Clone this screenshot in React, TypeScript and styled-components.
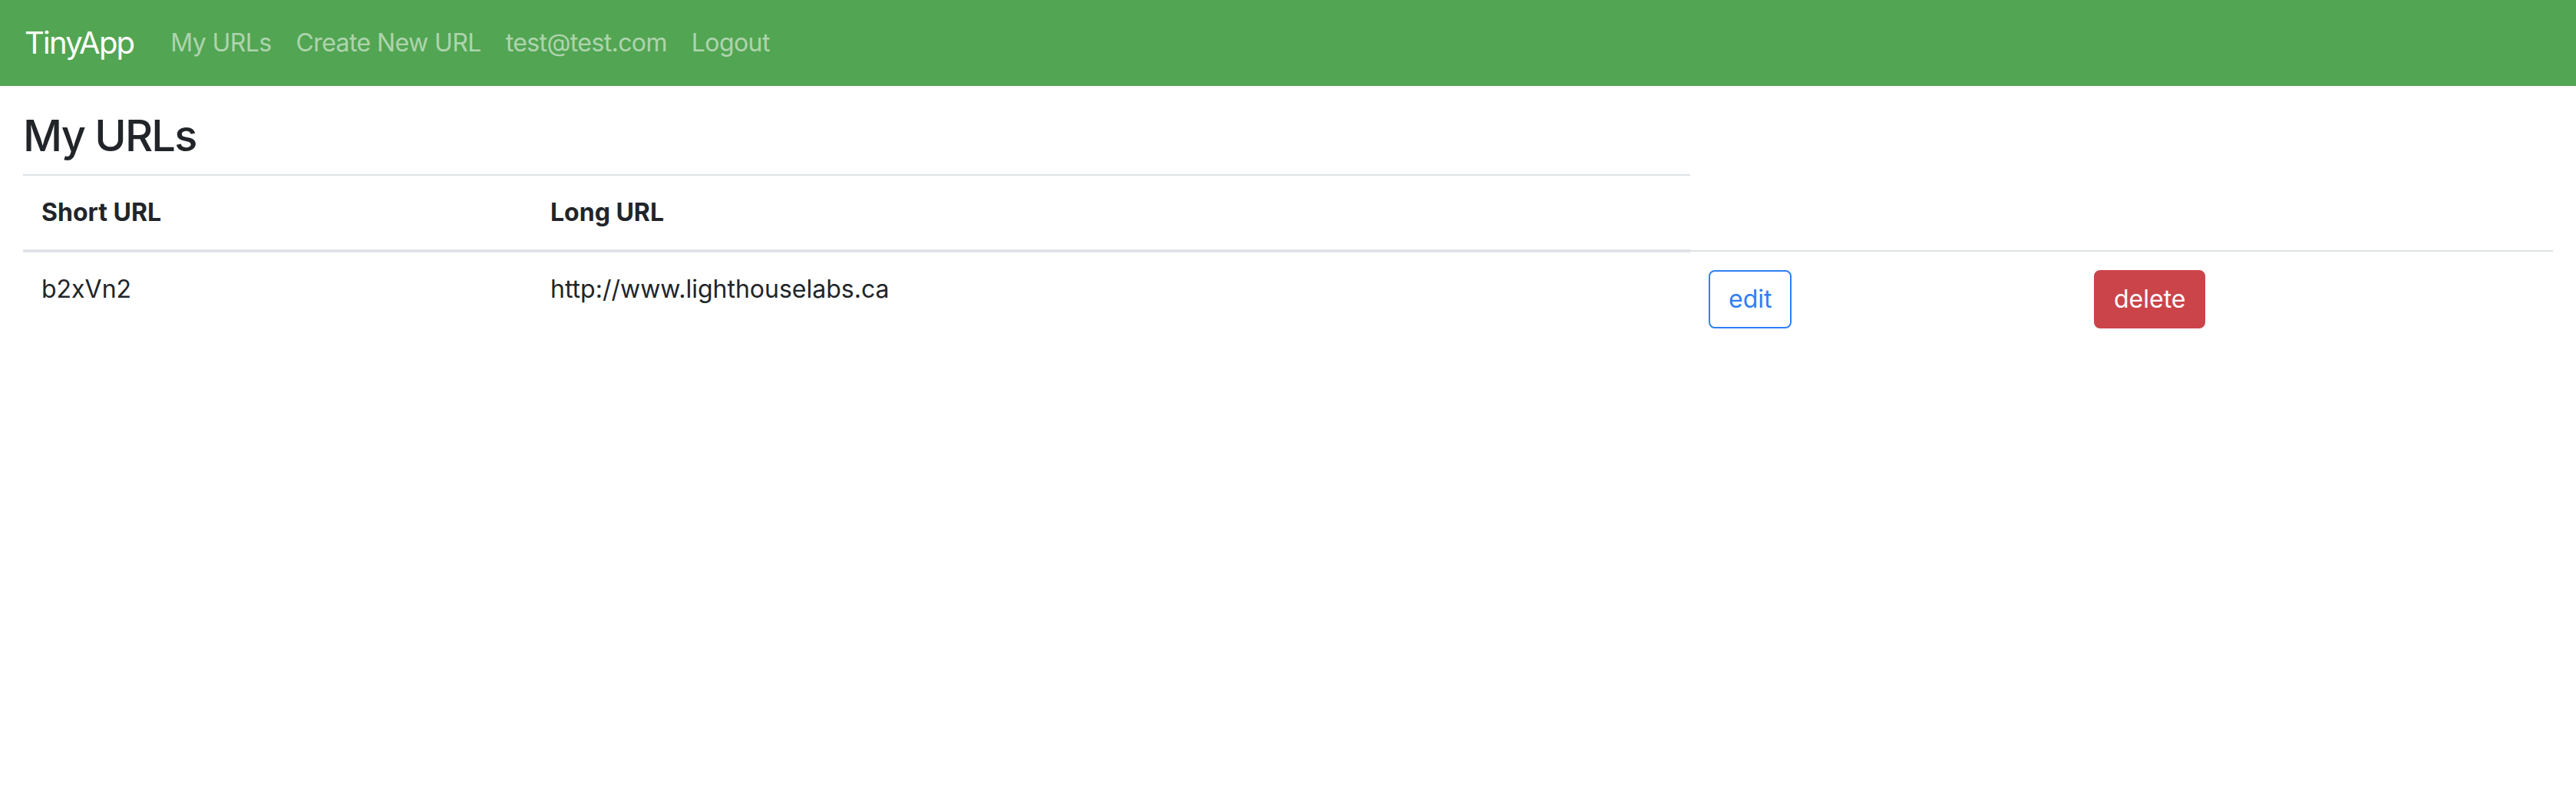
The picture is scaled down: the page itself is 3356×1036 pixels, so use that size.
import React from "react";
import styled, { createGlobalStyle } from "styled-components";

const GlobalStyle = createGlobalStyle`
  html, body {
    margin: 0;
    padding: 0;
    background: #fff;
  }
  body {
    font-family: Inter, "Noto Sans", "Liberation Sans", sans-serif;
    color: #212529;
    font-size: 32px;
    line-height: 1.5;
  }
  * {
    box-sizing: border-box;
  }
`;

type Url = { short: string; long: string };

const urls: Url[] = [{ short: "b2xVn2", long: "http://www.lighthouselabs.ca" }];

export default function App() {
  return (
    <>
      <GlobalStyle />
      <Navbar>
        <Brand href="#">TinyApp</Brand>
        <NavList>
          <NavLink href="#">My URLs</NavLink>
          <NavLink href="#">Create New URL</NavLink>
          <NavLink href="#">test@test.com</NavLink>
          <NavLink href="#">Logout</NavLink>
        </NavList>
      </Navbar>
      <Main>
        <Title>My URLs</Title>
        <Table>
          <colgroup>
            <col style={{ width: 663 }} />
            <col style={{ width: 1509 }} />
            <col style={{ width: 502 }} />
            <col style={{ width: 622 }} />
          </colgroup>
          <thead>
            <tr>
              <Th>Short URL</Th>
              <Th>Long URL</Th>
            </tr>
          </thead>
          <tbody>
            {urls.map((u) => (
              <tr key={u.short}>
                <Td>{u.short}</Td>
                <Td>{u.long}</Td>
                <Td>
                  <Button $variant="outline">edit</Button>
                </Td>
                <Td>
                  <Button $variant="danger">delete</Button>
                </Td>
              </tr>
            ))}
          </tbody>
        </Table>
      </Main>
    </>
  );
}

const Navbar = styled.nav`
  display: flex;
  align-items: center;
  height: 112px;
  padding: 16px 32px;
  background: #52a552;
`;

const Brand = styled.a`
  font-size: 40px;
  line-height: 60px;
  letter-spacing: -1.8px;
  padding: 10px 0;
  margin-right: 32px;
  color: #fff;
  text-decoration: none;
  white-space: nowrap;
`;

const NavList = styled.div`
  display: flex;
  align-items: center;
`;

const NavLink = styled.a`
  padding: 16px;
  font-size: 32px;
  line-height: 48px;
  letter-spacing: -0.6px;
  color: rgba(255, 255, 255, 0.55);
  text-decoration: none;
  white-space: nowrap;
`;

const Main = styled.main`
  padding: 0 30px;
  margin-top: 32px;
`;

const Title = styled.h3`
  margin: 0 0 16px;
  font-size: 56px;
  font-weight: 500;
  line-height: 1.2;
  letter-spacing: -1.8px;
`;

const Table = styled.table`
  width: 100%;
  table-layout: fixed;
  border-collapse: collapse;
  color: #212529;
`;

const Th = styled.th`
  padding: 24px;
  text-align: left;
  vertical-align: bottom;
  font-weight: 700;
  border-top: 2px solid #dee2e6;
  border-bottom: 4px solid #dee2e6;
`;

const Td = styled.td`
  padding: 24px;
  vertical-align: top;
  border-top: 2px solid #dee2e6;
`;

const Button = styled.button<{ $variant: "outline" | "danger" }>`
  font-family: inherit;
  font-size: 32px;
  line-height: 48px;
  padding: 12px 24px;
  border-radius: 8px;
  border: 2px solid ${(p) => (p.$variant === "danger" ? "#cb444a" : "#2f7ff6")};
  background: ${(p) => (p.$variant === "danger" ? "#cb444a" : "#fff")};
  color: ${(p) => (p.$variant === "danger" ? "#fff" : "#2f7ff6")};
  cursor: pointer;
`;
